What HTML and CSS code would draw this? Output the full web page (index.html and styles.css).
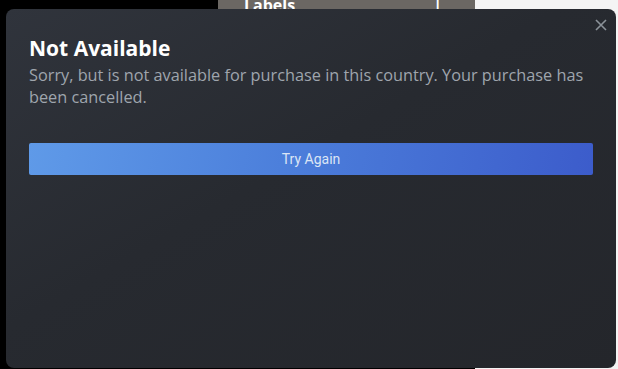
FILE: index.html
```html
<!DOCTYPE html>
<html>
<head>
  <title>Not Available</title>
  <link rel="stylesheet" href="styles.css">
</head>
<body>
  <div class="backdrop">
    <div class="backdrop-left"></div>
    <div class="backdrop-menu"><span class="menu-label">Labels</span><span class="menu-caret">|</span></div>
    <div class="backdrop-right"></div>
  </div>

  <div class="modal">
    <button class="modal-close" aria-label="Close">
      <svg width="12" height="12" viewBox="0 0 12 12">
        <path d="M1 1 L11 11 M11 1 L1 11" stroke="#8b9299" stroke-width="1.6" fill="none"/>
      </svg>
    </button>
    <h1 class="modal-title">Not Available</h1>
    <p class="modal-text">Sorry, but is not available for purchase in this country. Your purchase has been cancelled.</p>
    <button class="modal-button">Try Again</button>
  </div>
</body>
</html>
```

FILE: styles.css
```css
html, body {
  margin: 0;
  height: 100%;
  background-color: #000;
  overflow: hidden;
}

.backdrop {
  display: flex;
  height: 100%;
}

.backdrop-left {
  width: 218px;
  background-color: #000;
}

.backdrop-menu {
  width: 257px;
  height: 10px;
  background-color: #6b6763;
  display: flex;
  justify-content: space-between;
  align-items: flex-end;
  padding: 0 33px 0 26px;
  box-sizing: border-box;
  overflow: hidden;
  font-family: "Open Sans", sans-serif;
  font-weight: bold;
  font-size: 16px;
  line-height: 10px;
  color: #fff;
}

.backdrop-right {
  flex: 1;
  background-color: #f4f4f4;
}

.modal {
  position: absolute;
  left: 6px;
  top: 9px;
  width: 610px;
  height: 359px;
  box-sizing: border-box;
  padding: 27px 23px 0 23px;
  border-radius: 8px;
  background: linear-gradient(150deg, #30343c 0%, #272a30 45%, #24262b 100%);
  font-family: "Open Sans", sans-serif;
}

.modal-close {
  position: absolute;
  right: 9px;
  top: 10px;
  width: 12px;
  height: 12px;
  padding: 0;
  border: none;
  background: none;
  cursor: pointer;
}

.modal-close svg {
  display: block;
}

.modal-title {
  margin: 0;
  font-size: 21px;
  font-weight: bold;
  line-height: 24px;
  color: #fff;
}

.modal-text {
  margin: 4px 0 0 0;
  font-size: 16.3px;
  line-height: 22px;
  color: #9fa5ad;
}

.modal-button {
  display: block;
  width: 564px;
  height: 32px;
  margin-top: 35px;
  border: none;
  border-radius: 2px;
  background: linear-gradient(100deg, #5f9ae8 0%, #4c7fdb 45%, #3c5ccb 100%);
  font-family: "Roboto", sans-serif;
  font-size: 14px;
  color: #dbe5f5;
  cursor: pointer;
}
```
